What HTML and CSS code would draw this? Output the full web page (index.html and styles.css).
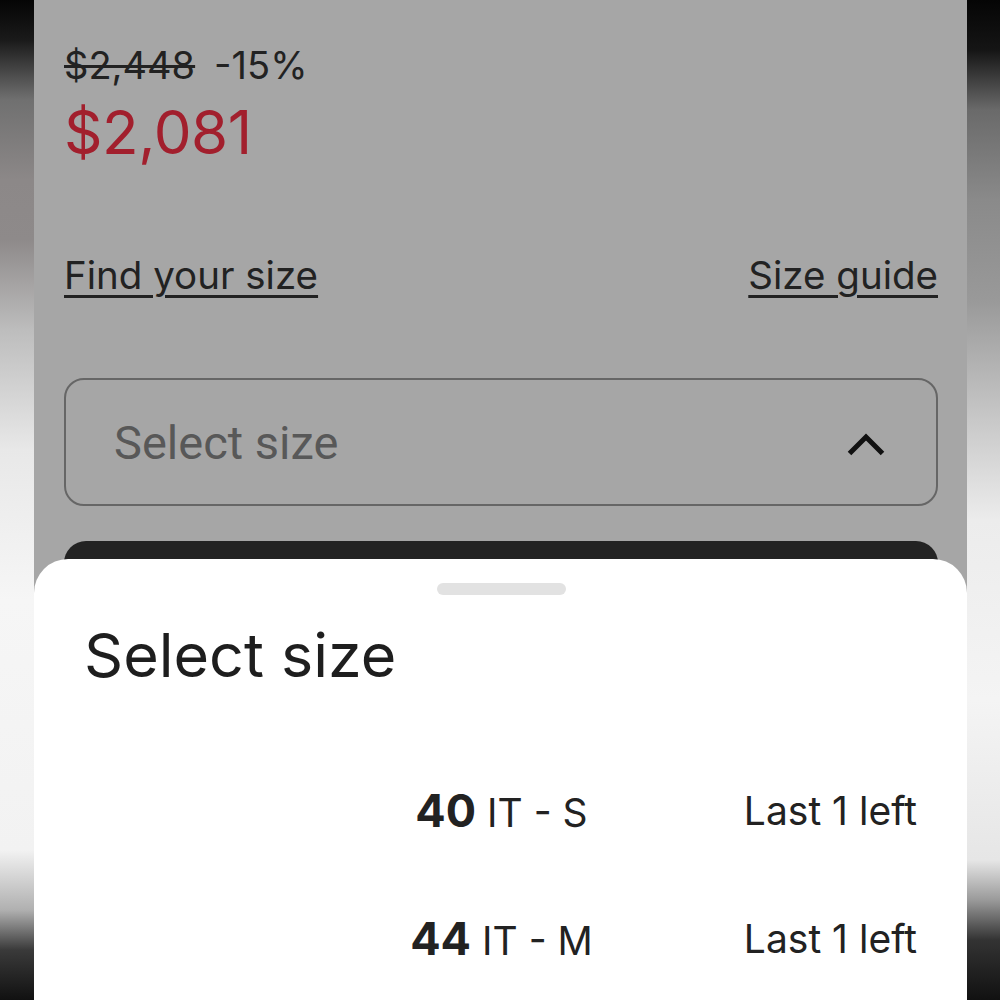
FILE: index.html
```html
<!DOCTYPE html>
<html>
<head>
<meta charset="utf-8">
<link rel="stylesheet" href="styles.css">
</head>
<body>
<div class="frame">
  <div class="edge edge-left"></div>
  <main class="screen">
    <div class="page">
      <div class="price-old-row">
        <span class="price-old">$2,448</span>
        <span class="discount">-15%</span>
      </div>
      <div class="price-new">$2,081</div>
      <div class="links">
        <a class="link">Find your size</a>
        <a class="link">Size guide</a>
      </div>
      <div class="select">
        <span class="select-label">Select size</span>
        <svg class="chevron" width="38" height="24" viewBox="0 0 38 24"><path d="M2.5 21.5 L19 5 L35.5 21.5" fill="none" stroke="#111" stroke-width="5"/></svg>
      </div>
      <div class="cta"></div>
    </div>
    <section class="sheet">
      <div class="handle"></div>
      <h2 class="sheet-title">Select size</h2>
      <ul class="sizes">
        <li class="size-row">
          <span class="size-name"><b>40</b> IT - S</span>
          <span class="stock">Last 1 left</span>
        </li>
        <li class="size-row">
          <span class="size-name"><b>44</b> IT - M</span>
          <span class="stock">Last 1 left</span>
        </li>
      </ul>
    </section>
  </main>
  <div class="edge edge-right"></div>
</div>
</body>
</html>
```
FILE: styles.css
```css
* { box-sizing: border-box; }
html, body { margin: 0; padding: 0; }
body {
  width: 1000px;
  height: 1000px;
  overflow: hidden;
  font-family: Inter, "Noto Sans", sans-serif;
  background: #000;
}
.frame {
  display: flex;
  height: 1000px;
}
.edge { flex: 0 0 34px; }
.edge-left {
  background: linear-gradient(to bottom,
    #050505 0px, #1a1a1a 40px, #707070 100px, #8c8888 180px, #8e8a8a 240px,
    #bdbdbd 330px, #e8e8e8 450px, #f6f6f6 600px, #f2f2f2 850px,
    #b0b0b0 910px, #3a3a3a 950px, #111 1000px);
}
.edge-right {
  flex-basis: 33px;
  background: linear-gradient(to bottom,
    #050505 0px, #151515 50px, #6a6a6a 110px, #8a8a8a 200px, #999 300px,
    #c8c8c8 420px, #ececec 520px, #f4f4f4 700px, #e6e6e6 860px,
    #9a9a9a 900px, #333 940px, #111 1000px);
}
.screen {
  flex: 0 0 933px;
  position: relative;
  background: #a6a6a6;
  overflow: hidden;
}
.page {
  padding: 42px 29px 0 30px;
  color: #222;
}
.price-old-row {
  font-size: 38px;
  line-height: 46px;
  display: flex;
  gap: 19px;
}
.price-old { text-decoration: line-through; text-decoration-thickness: 3px; }
.price-new {
  color: #a21f2d;
  font-size: 60px;
  line-height: 70px;
  margin-top: 9px;
  letter-spacing: -0.4px;
}
.links {
  display: flex;
  justify-content: space-between;
  margin-top: 85px;
  font-size: 38.5px;
  line-height: 46px;
}
.link {
  text-decoration: underline;
  text-decoration-thickness: 3px;
  text-underline-offset: 6px;
  color: #222;
}
.select {
  margin-top: 80px;
  height: 128px;
  border: 2px solid #666;
  border-radius: 20px;
  display: flex;
  align-items: center;
  justify-content: space-between;
  padding: 0 51px 0 48px;
}
.select-label {
  font-family: Roboto, sans-serif;
  font-size: 47px;
  color: #585858;
}
.chevron { margin-top: 4px; }
.cta {
  margin-top: 35px;
  height: 80px;
  background: #232323;
  border-radius: 22px;
}
.sheet {
  position: absolute;
  left: 0;
  right: 0;
  top: 559px;
  bottom: 0;
  background: #fff;
  border-radius: 34px 34px 0 0;
  padding: 24px 50px 0 52px;
}
.handle {
  width: 129px;
  height: 12px;
  border-radius: 6px;
  background: #e2e2e2;
  margin: 0 auto;
}
.sheet-title {
  margin: 24px 0 0;
  font-weight: 400;
  font-size: 61px;
  line-height: 72px;
  color: #1e1e1e;
  margin-left: -2px;
}
.sizes {
  list-style: none;
  margin: 55px 0 0;
  padding: 0;
}
.size-row {
  display: grid;
  grid-template-columns: 1fr auto 1fr;
  align-items: center;
  height: 128px;
  font-size: 39px;
  color: #222;
}
.size-name {
  grid-column: 2;
  white-space: nowrap;
}
.size-name b { font-weight: 700; font-size: 45px; }
.stock {
  grid-column: 3;
  justify-self: end;
}
```
